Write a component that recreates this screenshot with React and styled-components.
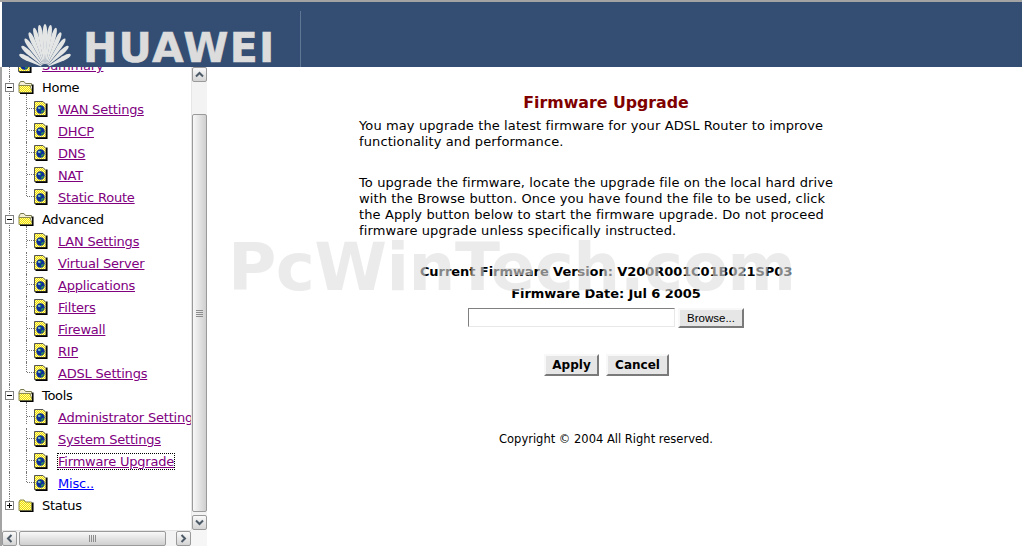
import React from "react";
import styled, { createGlobalStyle } from "styled-components";

const Global = createGlobalStyle`
  html, body { margin: 0; padding: 0; background: #fff; overflow: hidden; }
  body { font-family: "DejaVu Sans", Verdana, sans-serif; font-size: 13px; }
`;

const Page = styled.div`
  width: 1022px;
  height: 546px;
  display: flex;
  flex-direction: column;
  position: relative;
  overflow: hidden;
  background: #fff;
  border-top: 2px solid #a3a3a3;
  box-sizing: border-box;
`;

const Header = styled.header`
  height: 65px;
  flex: none;
  margin-left: 2px;
  background: #344e73;
  display: flex;
  align-items: flex-end;
  overflow: hidden;
`;

const Fan = styled.svg`
  width: 56px;
  height: 46px;
  margin-left: 16px;
  flex: none;
  display: block;
`;

const Brand = styled.div`
  font-family: "DejaVu Sans", Verdana, sans-serif;
  font-weight: 700;
  font-size: 41px;
  line-height: 30px;
  height: 30px;
  margin-left: 9px;
  margin-bottom: 4px;
  letter-spacing: 1.3px;
  color: #dcdcdc;
  -webkit-text-stroke: 0.5px #dcdcdc;
  width: 217px;
  flex: none;
`;

const HeaderRule = styled.div`
  width: 1px;
  height: 56px;
  background: #5f7695;
  flex: none;
`;

const Body = styled.div`
  flex: 1;
  display: flex;
  min-height: 0;
`;

const Sidebar = styled.aside`
  width: 207px;
  flex: none;
  display: grid;
  grid-template-columns: 189px 16px;
  grid-template-rows: 463px 16px;
  border-left: 2px solid #a3a3a3;
  box-sizing: border-box;
`;

const TreeClip = styled.div`
  overflow: hidden;
`;

const Tree = styled.ul`
  list-style: none;
  margin: -13px 0 0;
  padding: 0;
  width: 189px;
  white-space: nowrap;
`;

const guide = `
  content: "";
  position: absolute;
  border-style: dotted;
  border-color: #777;
  border-width: 0;
`;

const RootRow = styled.li`
  position: relative;
  height: 22px;
  display: flex;
  align-items: center;
  padding-left: 16px;
  color: #000;
  &::before {
    ${guide}
    left: 7px;
    top: 0;
    height: ${(p) => (p.$last ? "7px" : "22px")};
    border-left-width: 1px;
  }
`;

const Expander = styled.span`
  position: absolute;
  left: 3px;
  top: 7px;
  width: 7px;
  height: 7px;
  border: 1px solid #808080;
  background: #fff;
  z-index: 1;
  &::before {
    content: "";
    position: absolute;
    left: 1px;
    top: 3px;
    width: 5px;
    height: 1px;
    background: #000;
  }
  &::after {
    content: "";
    position: absolute;
    left: 3px;
    top: 1px;
    width: 1px;
    height: 5px;
    background: #000;
    display: ${(p) => (p.$open ? "none" : "block")};
  }
`;

const RootLabel = styled.span`
  margin-left: 8px;
  font-size: 13px;
  letter-spacing: -0.3px;
`;

const ChildRow = styled.li`
  position: relative;
  height: 22px;
  display: flex;
  align-items: center;
  padding-left: 32px;
  &::before {
    ${guide}
    left: 7px;
    top: 0;
    height: 22px;
    border-left-width: 1px;
  }
  &::after {
    ${guide}
    left: 24px;
    top: ${(p) => (p.$leadIn ? "-4px" : "0")};
    height: ${(p) => (p.$last ? "10px" : "22px")};
    width: 8px;
    border-left-width: 1px;
  }
`;

const Branch = styled.span`
  position: absolute;
  left: 25px;
  top: 10px;
  width: 7px;
  border-top: 1px dotted #777;
`;

const ChildLink = styled.a`
  margin: 1px 0 0 10px;
  color: ${(p) => (p.$fresh ? "#0000ff" : "#800080")};
  text-decoration: underline;
  font-size: 13px;
  letter-spacing: -0.2px;
  line-height: 15px;
  outline: ${(p) => (p.$focused ? "1px dotted #000" : "none")};
`;

const IconSvg = styled.svg`
  flex: none;
  display: block;
`;

const VBar = styled.div`
  display: flex;
  flex-direction: column;
  background: #f3f3f3;
  border-left: 1px solid #e6e6e6;
  box-sizing: border-box;
`;

const HBar = styled.div`
  display: flex;
  background: #f3f3f3;
  border-top: 1px solid #e6e6e6;
  box-sizing: border-box;
`;

const Corner = styled.div`
  background: #f6f6f6;
`;

const ArrowBtn = styled.div`
  width: 15px;
  height: 15px;
  flex: none;
  box-sizing: border-box;
  border: 1px solid #9a9a9a;
  border-radius: 2px;
  background: linear-gradient(#fafafa, #d4d4d4);
  display: flex;
  align-items: center;
  justify-content: center;
`;

const VThumb = styled.div`
  margin-top: 32px;
  height: 398px;
  box-sizing: border-box;
  border: 1px solid #9a9a9a;
  border-radius: 2px;
  background: linear-gradient(90deg, #f8f8f8, #cfcfcf);
  display: flex;
  align-items: center;
  justify-content: center;
`;

const VTrack = styled.div`
  flex: 1;
`;

const HThumb = styled.div`
  width: 147px;
  margin-left: 2px;
  box-sizing: border-box;
  border: 1px solid #9a9a9a;
  border-radius: 2px;
  background: linear-gradient(#f8f8f8, #cfcfcf);
  display: flex;
  align-items: center;
  justify-content: center;
`;

const HTrack = styled.div`
  flex: 1;
`;

const GripV = styled.div`
  width: 7px;
  height: 7px;
  background: repeating-linear-gradient(#8d8d8d 0 1px, transparent 1px 2px);
`;

const GripH = styled.div`
  width: 7px;
  height: 7px;
  background: repeating-linear-gradient(90deg, #8d8d8d 0 1px, transparent 1px 2px);
`;

const Main = styled.main`
  flex: 1;
  padding: 26px 17px 0 0;
  display: flex;
  flex-direction: column;
  align-items: center;
`;

const Title = styled.h1`
  margin: 0;
  font-size: 15.8px;
  line-height: 20px;
  font-weight: 700;
  color: #800000;
`;

const Para = styled.p`
  width: 494px;
  margin: ${(p) => p.$top}px 0 0;
  font-size: 13px;
  letter-spacing: 0.11px;
  line-height: 16px;
  color: #000;
`;

const InfoLine = styled.div`
  margin-top: ${(p) => p.$top}px;
  font-size: 13px;
  letter-spacing: -0.06px;
  line-height: 16px;
  font-weight: 700;
  color: #000;
`;

const FileRow = styled.div`
  display: flex;
  gap: 3px;
  margin-top: 6px;
`;

const FileInput = styled.div`
  width: 207px;
  height: 19px;
  box-sizing: border-box;
  border: 1px solid;
  border-color: #808080 #e8e8e8 #e8e8e8 #808080;
  background: #fff;
`;

const raised = `
  box-sizing: border-box;
  border: 2px solid;
  border-color: #f8f8f8 #7a7a7a #7a7a7a #f8f8f8;
  background: #e6e6e6;
  color: #000;
  padding: 0;
`;

const BrowseBtn = styled.button`
  ${raised}
  width: 66px;
  height: 20px;
  font-family: "Liberation Sans", Arial, sans-serif;
  font-size: 11.5px;
`;

const Actions = styled.div`
  display: flex;
  gap: 7px;
  margin-top: 26px;
  margin-left: 1px;
`;

const ActionBtn = styled.button`
  ${raised}
  width: ${(p) => p.$w}px;
  height: 22px;
  font-family: "DejaVu Sans", Verdana, sans-serif;
  font-size: 12px;
  font-weight: 700;
`;

const Copyright = styled.div`
  margin-top: 55px;
  font-size: 11.5px;
  line-height: 16px;
  color: #000;
`;

const Watermark = styled.div`
  position: absolute;
  left: 228px;
  top: 228px;
  font-family: "DejaVu Sans", Verdana, sans-serif;
  font-size: 66px;
  line-height: 76px;
  font-weight: 700;
  letter-spacing: -0.6px;
  color: rgba(222, 222, 222, 0.6);
  pointer-events: none;
  white-space: nowrap;
`;

const FanLogo = () => {
  const cx = 27;
  const cy = 47;
  const petals = [];
  for (let deg = -72; deg <= 72; deg += 12) {
    const a = (deg * Math.PI) / 180;
    const tx = cx + 27 * Math.sin(a);
    const ty = cy - 44 * Math.cos(a);
    const vx = tx - cx;
    const vy = ty - cy;
    const len = Math.hypot(vx, vy);
    const nx = -vy / len;
    const ny = vx / len;
    const w = 2.3;
    const sx = cx + vx * 0.72;
    const sy = cy + vy * 0.72;
    const d = `M${cx} ${cy} L${sx + nx * w} ${sy + ny * w} Q${tx + nx * w} ${ty + ny * w} ${tx} ${ty} Q${tx - nx * w} ${ty - ny * w} ${sx - nx * w} ${sy - ny * w} Z`;
    petals.push(<path key={deg} d={d} fill="#e4e6e6" />);
  }
  return (
    <Fan viewBox="0 0 56 46">
      {petals}
      <circle cx={cx} cy={cy} r="4" fill="#344e73" />
    </Fan>
  );
};

const Dither = ({ id }) => (
  <pattern id={id} width="2" height="2" patternUnits="userSpaceOnUse">
    <rect width="2" height="2" fill="#fff7a0" />
    <rect width="1" height="1" fill="#f2e200" />
    <rect x="1" y="1" width="1" height="1" fill="#f2e200" />
  </pattern>
);

const FolderIcon = ({ open, id }) => (
  <IconSvg width="16" height="13" viewBox="0 0 16 13">
    <defs>
      <Dither id={id} />
    </defs>
    {open ? (
      <>
        <path d="M1 3 L2.500 0.500 H6 L7.500 2.500 H13.500 V5 H1Z" fill="#f4f0d8" stroke="#7a7a50" />
        <path d="M1 11.500 V4.500 H12 L14.500 11.500Z" fill={`url(#${id})`} stroke="#8a8a50" />
      </>
    ) : (
      <path d="M1 3 L2 1 H6 L7.500 3 H13.500 V11.500 H1Z" fill={`url(#${id})`} stroke="#8a8a50" />
    )}
    <path d="M14.800 3.500 V12.500 H2" fill="none" stroke="#000" strokeWidth="1.500" />
  </IconSvg>
);

const PageIcon = ({ id }) => (
  <IconSvg width="14" height="16" viewBox="0 0 14 16">
    <defs>
      <Dither id={id} />
    </defs>
    <path d="M0.500 0.500 H9 L12 3.500 V14.500 H0.500Z" fill={`url(#${id})`} stroke="#555" />
    <path d="M12.800 2.500 V15.300 H1.500" fill="none" stroke="#000" strokeWidth="1.500" />
    <circle cx="6.500" cy="8.500" r="4.200" fill="#0a2f9c" />
    <path d="M4 6.500 Q6 5 7.500 6.500 L6.500 8.500 L5 8 Z M7 10 L9.500 8.500 L9.500 10.500 L7.500 12Z" fill="#2f9a4a" />
    <circle cx="5" cy="7" r="0.900" fill="#9cc8e8" />
  </IconSvg>
);

const Chevron = ({ d }) => (
  <IconSvg width="9" height="9" viewBox="0 0 9 9">
    <path d={d} fill="none" stroke="#4d5a68" strokeWidth="2" />
  </IconSvg>
);

const sections = [
  { label: "Home", children: ["WAN Settings", "DHCP", "DNS", "NAT", "Static Route"] },
  { label: "Advanced", children: ["LAN Settings", "Virtual Server", "Applications", "Filters", "Firewall", "RIP", "ADSL Settings"] },
  { label: "Tools", children: ["Administrator Settings", "System Settings", "Firmware Upgrade", "Misc.."] },
];

export default function App() {
  return (
    <Page>
      <Global />
      <Header>
        <FanLogo />
        <Brand>HUAWEI</Brand>
        <HeaderRule />
      </Header>
      <Body>
        <Sidebar>
          <TreeClip>
            <Tree>
              <RootRow>
                <PageIcon id="p-sum" />
                <ChildLink>Summary</ChildLink>
              </RootRow>
              {sections.map((s) => (
                <React.Fragment key={s.label}>
                  <RootRow>
                    <Expander $open />
                    <FolderIcon open id={`f-${s.label}`} />
                    <RootLabel>{s.label}</RootLabel>
                  </RootRow>
                  {s.children.map((c, i) => (
                    <ChildRow key={c} $leadIn={i === 0} $last={i === s.children.length - 1}>
                      <Branch />
                      <PageIcon id={`p-${c.replace(/\W/g, "")}`} />
                      <ChildLink $fresh={c === "Misc.."} $focused={c === "Firmware Upgrade"}>{c}</ChildLink>
                    </ChildRow>
                  ))}
                </React.Fragment>
              ))}
              <RootRow $last>
                <Expander />
                <FolderIcon id="f-status" />
                <RootLabel>Status</RootLabel>
              </RootRow>
            </Tree>
          </TreeClip>
          <VBar>
            <ArrowBtn><Chevron d="M1 6.500 L4.500 3 L8 6.500" /></ArrowBtn>
            <VThumb><GripV /></VThumb>
            <VTrack />
            <ArrowBtn><Chevron d="M1 2.500 L4.500 6 L8 2.500" /></ArrowBtn>
          </VBar>
          <HBar>
            <ArrowBtn><Chevron d="M6.500 1 L3 4.500 L6.500 8" /></ArrowBtn>
            <HThumb><GripH /></HThumb>
            <HTrack />
            <ArrowBtn><Chevron d="M2.500 1 L6 4.500 L2.500 8" /></ArrowBtn>
          </HBar>
          <Corner />
        </Sidebar>
        <Main>
          <Title>Firmware Upgrade</Title>
          <Para $top={5}>
            You may upgrade the latest firmware for your ADSL Router to improve<br />
            functionality and performance.
          </Para>
          <Para $top={25}>
            To upgrade the firmware, locate the upgrade file on the local hard drive<br />
            with the Browse button. Once you have found the file to be used, click<br />
            the Apply button below to start the firmware upgrade. Do not proceed<br />
            firmware upgrade unless specifically instructed.
          </Para>
          <InfoLine $top={25}>Current Firmware Version: V200R001C01B021SP03</InfoLine>
          <InfoLine $top={6}>Firmware Date: Jul 6 2005</InfoLine>
          <FileRow>
            <FileInput />
            <BrowseBtn>Browse...</BrowseBtn>
          </FileRow>
          <Actions>
            <ActionBtn $w={55}>Apply</ActionBtn>
            <ActionBtn $w={63}>Cancel</ActionBtn>
          </Actions>
          <Copyright>Copyright © 2004 All Right reserved.</Copyright>
        </Main>
      </Body>
      <Watermark>PcWinTech.com</Watermark>
    </Page>
  );
}
